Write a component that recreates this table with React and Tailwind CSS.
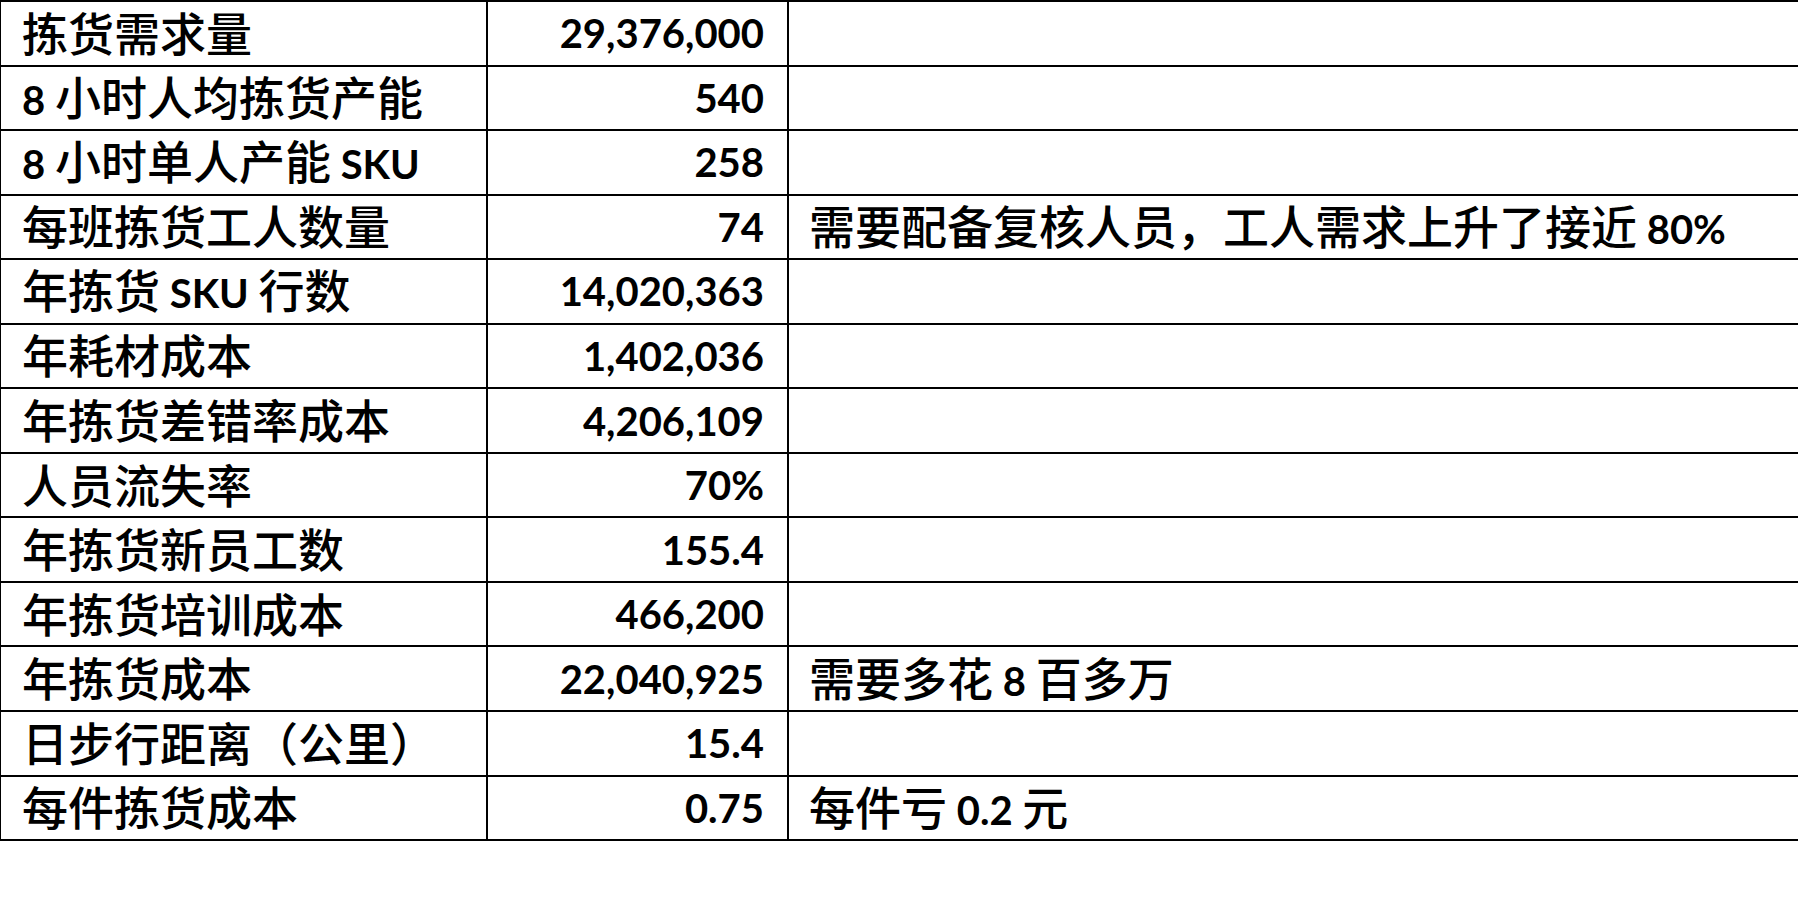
import React from "react";

const rows = [
  ["拣货需求量", "29,376,000", ""],
  ["8 小时人均拣货产能", "540", ""],
  ["8 小时单人产能 SKU", "258", ""],
  ["每班拣货工人数量", "74", "需要配备复核人员，工人需求上升了接近 80%"],
  ["年拣货 SKU 行数", "14,020,363", ""],
  ["年耗材成本", "1,402,036", ""],
  ["年拣货差错率成本", "4,206,109", ""],
  ["人员流失率", "70%", ""],
  ["年拣货新员工数", "155.4", ""],
  ["年拣货培训成本", "466,200", ""],
  ["年拣货成本", "22,040,925", "需要多花 8 百多万"],
  ["日步行距离（公里）", "15.4", ""],
  ["每件拣货成本", "0.75", "每件亏 0.2 元"],
];

function Mixed({ text }) {
  const parts = text.split(/([A-Za-z0-9.,% ]+)/).filter((p) => p.length > 0);
  return (
    <span className="whitespace-pre leading-[1.2]">
      {parts.map((p, i) =>
        /^[A-Za-z0-9.,% ]+$/.test(p) ? (
          <span key={i} className="font-['Lato',sans-serif] font-bold text-[40px]">
            {p}
          </span>
        ) : (
          <span key={i} className="font-['Noto_Sans_CJK_SC',sans-serif] font-medium text-[46px]">
            {p}
          </span>
        )
      )}
    </span>
  );
}

export default function App() {
  return (
    <div className="w-full min-h-[904px] bg-white text-black">
      <div className="grid grid-cols-[487px_301px_1fr] auto-rows-[64.56px] border-t-2 border-l border-black">
        {rows.map((r, i) => (
          <React.Fragment key={i}>
            <div className="flex items-center pl-[21px] pb-[4px] border-r-2 border-b-2 border-black">
              <Mixed text={r[0]} />
            </div>
            <div className="flex items-center justify-end pr-[23px] border-r-2 border-b-2 border-black">
              <span className="font-['Lato',sans-serif] font-bold text-[40px] leading-[1.2]">{r[1]}</span>
            </div>
            <div className="flex items-center pl-[20px] pb-[4px] border-b-2 border-black">
              {r[2] ? <Mixed text={r[2]} /> : null}
            </div>
          </React.Fragment>
        ))}
      </div>
    </div>
  );
}
